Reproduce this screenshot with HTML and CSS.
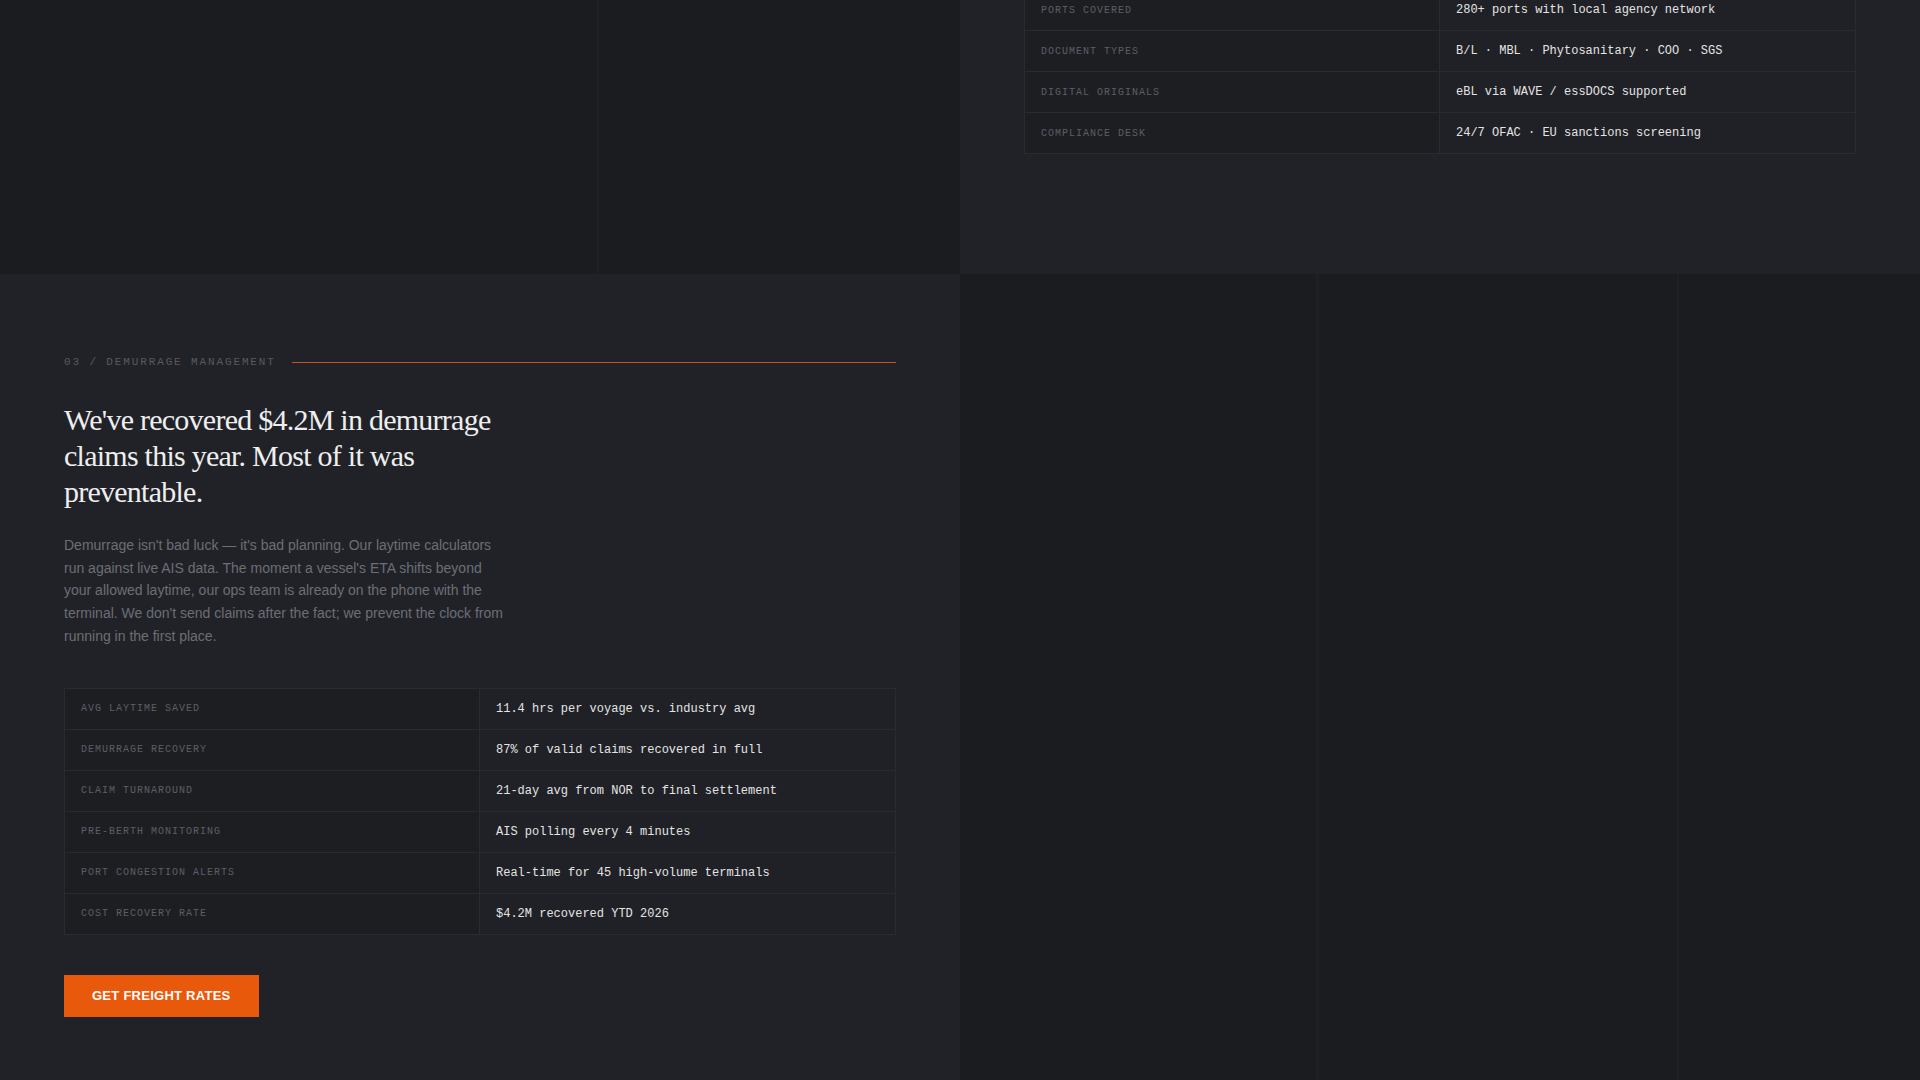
FILE: index.html
```html
<!DOCTYPE html>
<html lang="en">
<head>
<meta charset="utf-8">
<title>Demurrage Management</title>
<link rel="stylesheet" href="styles.css">
</head>
<body>
<section class="band band-top">
  <div class="visual visual-a"></div>
  <div class="content content-top">
    <div class="spec">
      <div class="spec-row"><div class="spec-label">PORTS COVERED</div><div class="spec-value">280+ ports with local agency network</div></div>
      <div class="spec-row"><div class="spec-label">DOCUMENT TYPES</div><div class="spec-value">B/L · MBL · Phytosanitary · COO · SGS</div></div>
      <div class="spec-row"><div class="spec-label">DIGITAL ORIGINALS</div><div class="spec-value">eBL via WAVE / essDOCS supported</div></div>
      <div class="spec-row"><div class="spec-label">COMPLIANCE DESK</div><div class="spec-value">24/7 OFAC · EU sanctions screening</div></div>
    </div>
  </div>
</section>
<section class="band band-bottom">
  <div class="content content-main">
    <div class="eyebrow"><span class="eyebrow-text">03 / DEMURRAGE MANAGEMENT</span><span class="eyebrow-rule"></span></div>
    <h2 class="headline">We've recovered $4.2M in demurrage claims this year. Most of it was preventable.</h2>
    <p class="lede">Demurrage isn't bad luck — it's bad planning. Our laytime calculators run against live AIS data. The moment a vessel's ETA shifts beyond your allowed laytime, our ops team is already on the phone with the terminal. We don't send claims after the fact; we prevent the clock from running in the first place.</p>
    <div class="spec spec-main">
      <div class="spec-row"><div class="spec-label">AVG LAYTIME SAVED</div><div class="spec-value">11.4 hrs per voyage vs. industry avg</div></div>
      <div class="spec-row"><div class="spec-label">DEMURRAGE RECOVERY</div><div class="spec-value">87% of valid claims recovered in full</div></div>
      <div class="spec-row"><div class="spec-label">CLAIM TURNAROUND</div><div class="spec-value">21-day avg from NOR to final settlement</div></div>
      <div class="spec-row"><div class="spec-label">PRE-BERTH MONITORING</div><div class="spec-value">AIS polling every 4 minutes</div></div>
      <div class="spec-row"><div class="spec-label">PORT CONGESTION ALERTS</div><div class="spec-value">Real-time for 45 high-volume terminals</div></div>
      <div class="spec-row"><div class="spec-label">COST RECOVERY RATE</div><div class="spec-value">$4.2M recovered YTD 2026</div></div>
    </div>
    <a class="btn" href="#">GET FREIGHT RATES</a>
  </div>
  <div class="visual visual-b"></div>
</section>
</body>
</html>
```
FILE: styles.css
```css
html, body {
  margin: 0;
  padding: 0;
  background: #1b1c20;
}
body {
  font-family: "Liberation Sans", Arial, sans-serif;
  color: #e6e6e6;
  overflow: hidden;
}
.band {
  display: grid;
  grid-template-columns: 1fr 1fr;
}
.band-top {
  height: 274px;
  grid-template-rows: 274px;
  overflow: hidden;
}
.visual {
  background-color: #1b1c20;
}
.visual-a {
  background-image: linear-gradient(to right, transparent 597px, #1f2024 597px, #1f2024 599px, transparent 599px);
}
.visual-b {
  background-image: linear-gradient(to right, transparent 356px, #1f2024 356px, #1f2024 359px, transparent 359px, transparent 717px, #1f2024 717px, #1f2024 719px, transparent 719px);
}
.content {
  background: #212228;
  padding: 0 64px;
}
.content-top {
  display: flex;
  flex-direction: column;
  justify-content: flex-end;
  min-height: 0;
  overflow: hidden;
  padding-bottom: 120px;
}
.content-main {
  padding-top: 80px;
  padding-bottom: 80px;
}
.spec {
  border: 1px solid #2a2b31;
  font-family: "Liberation Mono", "DejaVu Sans Mono", monospace;
  flex-shrink: 0;
}
.spec-row {
  display: grid;
  grid-template-columns: 1fr 1fr;
  height: 40px;
  border-bottom: 1px solid #2a2b31;
}
.spec-row:last-child {
  border-bottom: none;
}
.spec-label {
  display: flex;
  align-items: center;
  padding: 0 16px;
  background: #1d1e22;
  border-right: 1px solid #2a2b31;
  font-size: 10px;
  letter-spacing: 0.1em;
  color: #5b5e66;
}
.spec-value {
  display: flex;
  align-items: center;
  padding: 0 16px;
  background: #202126;
  font-size: 12px;
  color: #e4e4e4;
}
.eyebrow {
  display: flex;
  align-items: center;
  gap: 16px;
  height: 16px;
}
.eyebrow-text {
  font-family: "Liberation Mono", "DejaVu Sans Mono", monospace;
  font-size: 11px;
  letter-spacing: 0.17em;
  color: #565960;
  white-space: nowrap;
}
.eyebrow-rule {
  flex: 1;
  height: 1px;
  background: #c8511d;
}
.headline {
  margin: 32px 0 0;
  max-width: 460px;
  font-family: "Liberation Serif", "Times New Roman", serif;
  font-weight: 400;
  font-size: 30px;
  line-height: 36px;
  letter-spacing: -0.025em;
  color: #eeeeee;
}
.lede {
  margin: 24px 0 0;
  max-width: 440px;
  font-size: 14px;
  line-height: 22.7px;
  color: #6b6e75;
}
.spec-main {
  margin-top: 40px;
}
.btn {
  display: inline-block;
  margin-top: 40px;
  padding: 13px 28px;
  background: #e8590c;
  color: #ffffff;
  font-family: "Liberation Sans", Arial, sans-serif;
  font-weight: 700;
  font-size: 13px;
  line-height: 16px;
  letter-spacing: 0.02em;
  text-decoration: none;
}
```
